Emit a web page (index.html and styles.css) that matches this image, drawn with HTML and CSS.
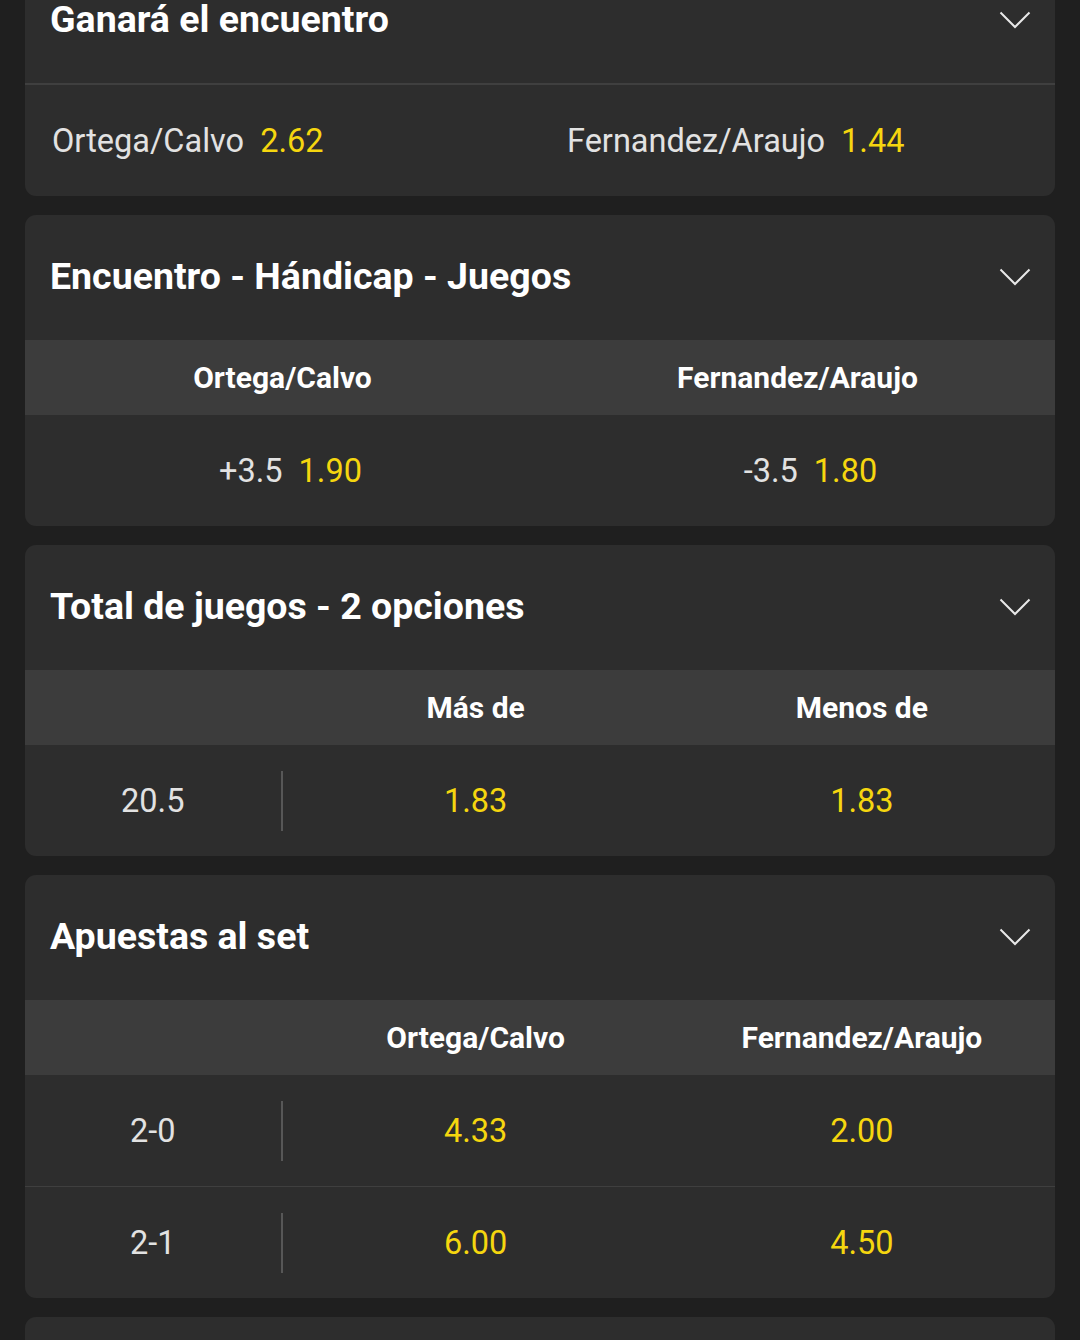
FILE: index.html
```html
<!DOCTYPE html>
<html lang="es">
<head>
	<meta charset="utf-8">
	<title>Mercados</title>
	<link rel="stylesheet" href="styles.css">
</head>

<body>
	<div id="markets">
		<div class="card first">
			<div class="card-head">
				<h2>Ganará el encuentro</h2>
				<svg class="chevron" viewBox="0 0 32 18"><path d="M1.5 1.5 L16 16 L30.5 1.5"/></svg>
			</div>
			<div class="two-left line-top">
				<div class="cell"><span class="label">Ortega/Calvo</span><span class="odd">2.62</span></div>
				<div class="cell"><span class="label">Fernandez/Araujo</span><span class="odd">1.44</span></div>
			</div>
		</div>

		<div class="card">
			<div class="card-head">
				<h2>Encuentro - Hándicap - Juegos</h2>
				<svg class="chevron" viewBox="0 0 32 18"><path d="M1.5 1.5 L16 16 L30.5 1.5"/></svg>
			</div>
			<div class="cols-2 thead">
				<div>Ortega/Calvo</div>
				<div>Fernandez/Araujo</div>
			</div>
			<div class="cols-2 trow">
				<div class="pair"><span class="label">+3.5</span><span class="odd">1.90</span></div>
				<div class="pair right"><span class="label">-3.5</span><span class="odd">1.80</span></div>
			</div>
		</div>

		<div class="card">
			<div class="card-head">
				<h2>Total de juegos - 2 opciones</h2>
				<svg class="chevron" viewBox="0 0 32 18"><path d="M1.5 1.5 L16 16 L30.5 1.5"/></svg>
			</div>
			<div class="cols-3 thead">
				<div></div>
				<div>Más de</div>
				<div>Menos de</div>
			</div>
			<div class="cols-3 trow">
				<div class="key">20.5</div>
				<div class="odd">1.83</div>
				<div class="odd">1.83</div>
			</div>
		</div>

		<div class="card">
			<div class="card-head">
				<h2>Apuestas al set</h2>
				<svg class="chevron" viewBox="0 0 32 18"><path d="M1.5 1.5 L16 16 L30.5 1.5"/></svg>
			</div>
			<div class="cols-3 thead">
				<div></div>
				<div>Ortega/Calvo</div>
				<div>Fernandez/Araujo</div>
			</div>
			<div class="cols-3 trow">
				<div class="key">2-0</div>
				<div class="odd">4.33</div>
				<div class="odd">2.00</div>
			</div>
			<div class="cols-3 trow line-top">
				<div class="key">2-1</div>
				<div class="odd">6.00</div>
				<div class="odd">4.50</div>
			</div>
		</div>

		<div class="card stub"></div>
	</div>
</body>
</html>
```

FILE: styles.css
```css
body {
	margin: 0;
	padding: 0;
	background: #1f1f1f;
	font-family: Roboto, 'Liberation Sans', sans-serif;
	color: #e4e4e4;
	overflow: hidden;
}

#markets {
	display: flex;
	flex-direction: column;
	gap: 19px;
	padding: 0 25px;
	margin-top: -42px;
}

.card {
	background: #2d2d2d;
	border-radius: 11px;
	overflow: hidden;
}

.card-head {
	height: 125px;
	display: flex;
	align-items: center;
	justify-content: space-between;
	padding: 0 24px 0 25px;
}

.card-head h2 {
	margin: -3px 0 0 0;
	font-size: 37.5px;
	font-weight: 700;
	color: #fff;
}

.chevron {
	width: 32px;
	height: 18px;
	margin-top: -2px;
	fill: none;
	stroke: #e8e8e8;
	stroke-width: 2;
}

.line-top {
	border-top: 2px solid #3f3f3f;
}

.two-left {
	display: grid;
	grid-template-columns: 1fr 1fr;
	height: 111px;
	align-items: center;
}

.two-left .cell {
	padding-left: 27px;
}

.label {
	font-size: 32.5px;
	color: #e2e2e2;
	margin-right: 16px;
}

.odd {
	font-size: 32.5px;
	color: #f5d60f;
}

.thead {
	background: #3c3c3c;
	height: 75px;
	align-items: center;
	font-size: 30px;
	font-weight: 700;
	color: #fff;
}

.trow {
	height: 111px;
	align-items: center;
}

.cols-2 {
	display: grid;
	grid-template-columns: 1fr 1fr;
	text-align: center;
}

.pair {
	padding-left: 16px;
}

.pair.right {
	padding-left: 26px;
}

.cols-3 {
	display: grid;
	grid-template-columns: 2fr 3fr 3fr;
	text-align: center;
}

.key {
	font-size: 32.5px;
	color: #e2e2e2;
	border-right: 2px solid #575757;
	line-height: 60px;
}

.trow.line-top {
	height: 111px;
	border-top-width: 1px;
}

.stub {
	height: 60px;
}
```
